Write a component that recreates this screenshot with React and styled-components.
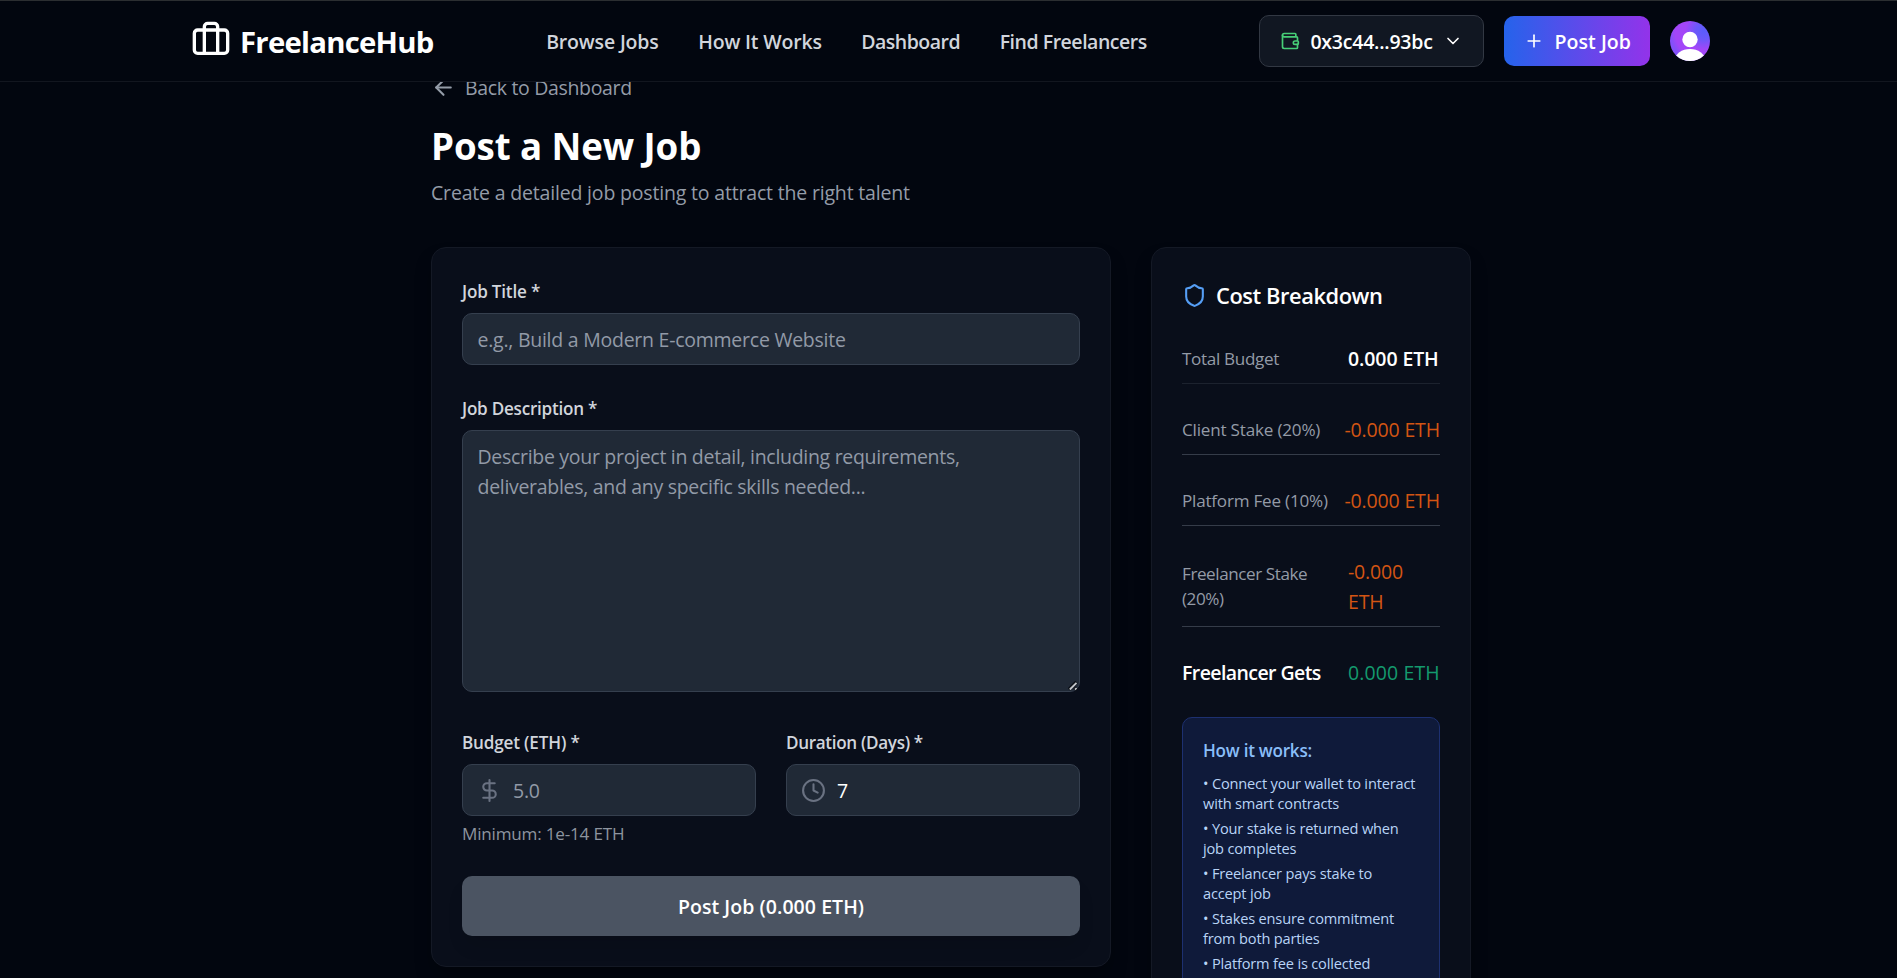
import React from "react";
import styled, { createGlobalStyle } from "styled-components";
import { Briefcase, Wallet, ChevronDown, Plus, ArrowLeft, DollarSign, Clock, Shield } from "lucide-react";

const GlobalStyle = createGlobalStyle`
  *, *::before, *::after { box-sizing: border-box; }
  body {
    margin: 0;
    overflow: hidden;
    background: #02060f;
    color: #fff;
    font-family: "Open Sans", "Noto Sans", sans-serif;
    font-size: 19.5px;
    line-height: 30px;
  }
  input, textarea, button { font: inherit; }
`;

const Page = styled.div`
  width: 1902px;
  height: 978px;
  overflow: hidden;
`;

const Header = styled.header`
  position: relative;
  z-index: 10;
  height: 82px;
  background: #02060f;
  border-top: 1px solid #2b2e31;
  border-bottom: 1px solid #12161f;
`;

const HeaderInner = styled.div`
  width: 1519px;
  height: 80px;
  margin-left: 191px;
  display: flex;
  align-items: center;
  justify-content: space-between;
`;

const Text = styled.span`
  letter-spacing: ${(p) => p.$track || 0}px;
  white-space: nowrap;
  position: relative;
  top: ${(p) => p.$drop ?? 1}px;
`;

const Logo = styled.div`
  display: flex;
  align-items: center;
  gap: 9px;
  width: 243px;
  font-size: 29.3px;
  font-weight: 700;
  line-height: 40px;
  svg { position: relative; top: -1px; }
`;

const Nav = styled.nav`
  display: flex;
  gap: 39.5px;
  font-weight: 600;
  color: #d1d5dc;
`;

const Actions = styled.div`
  display: flex;
  align-items: center;
  gap: 20px;
  font-weight: 600;
`;

const WalletButton = styled.button`
  display: flex;
  align-items: center;
  justify-content: space-between;
  width: 225px;
  height: 52px;
  padding: 0 20px;
  color: #fff;
  font-weight: 600;
  background: #111722;
  border: 1px solid #323843;
  border-radius: 10px;
`;

const PostLink = styled.button`
  display: flex;
  align-items: center;
  justify-content: space-between;
  width: 146px;
  height: 50px;
  padding: 0 19px 0 20px;
  border: 0;
  border-radius: 10px;
  color: #fff;
  font-weight: 600;
  background: linear-gradient(90deg, #2563eb, #9333ea);
`;

const Avatar = styled.svg`
  display: block;
  width: 40px;
  height: 40px;
  border-radius: 50%;
`;

const Main = styled.main`
  width: 1040px;
  margin: -10px auto 0;
`;

const BackLink = styled.a`
  display: flex;
  align-items: center;
  gap: 9px;
  margin-bottom: 20px;
  color: #949ca8;
`;

const Title = styled.h1`
  margin: 0 0 10px;
  font-size: 36.7px;
  font-weight: 700;
  line-height: 45px;
`;

const Subtitle = styled.p`
  margin: 0 0 40px;
  color: #949ca8;
`;

const Columns = styled.div`
  display: grid;
  grid-template-columns: 680px 320px;
  gap: 40px;
  align-items: start;
`;

const Card = styled.section`
  padding: 30px;
  background: #090e1a;
  border: 1px solid #141925;
  border-radius: 15px;
  box-shadow: 0 12px 19px -4px rgba(0, 0, 0, 0.35);
`;

const Field = styled.div`
  display: flex;
  flex-direction: column;
  margin-bottom: ${(p) => (p.$flush ? 0 : 30)}px;
`;

const Label = styled.label`
  margin-bottom: 10px;
  font-size: 17.1px;
  font-weight: 600;
  line-height: 25px;
  color: #d1d5dc;
`;

const controlStyle = `
  width: 100%;
  color: #fff;
  background: #202936;
  border: 1px solid #353f4e;
  border-radius: 10px;
  outline: none;
  &::placeholder { color: #929aa7; opacity: 1; }
`;

const Input = styled.input`
  ${controlStyle}
  letter-spacing: -0.25px;
  height: 52px;
  padding: 1px 15px 0 ${(p) => (p.$icon ? 50 : 14.5)}px;
`;

const TextAreaFrame = styled.div`
  display: grid;
  margin-bottom: 7px;
  > * { grid-area: 1 / 1; }
`;

const TextArea = styled.textarea`
  ${controlStyle}
  letter-spacing: -0.3px;
  height: 262px;
  padding: 11px 15px 10px 14.5px;
  line-height: 30px;
  resize: none;
  display: block;
`;

const ResizeGrip = styled.svg`
  align-self: end;
  justify-self: end;
  z-index: 1;
  width: 11px;
  height: 11px;
  margin: 0 1px 1px 0;
`;

const FieldPair = styled.div`
  display: grid;
  grid-template-columns: 1fr 1fr;
  gap: 30px;
  margin-bottom: 30px;
`;

const InputWithIcon = styled.div`
  display: grid;
  align-items: center;
  > * { grid-area: 1 / 1; }
  svg { margin-left: 15px; z-index: 1; color: #6a7282; }
`;

const Hint = styled.p`
  margin: 5px 0 0;
  font-size: 17.1px;
  line-height: 25px;
  color: #8d949f;
`;

const Submit = styled.button`
  width: 100%;
  height: 60px;
  border: 0;
  border-radius: 10px;
  color: #fff;
  font-weight: 600;
  background: #4b5462;
  box-shadow: 0 12px 19px -4px rgba(0, 0, 0, 0.12);
`;

const CardHeading = styled.h2`
  display: flex;
  align-items: center;
  gap: 9px;
  margin: 0 0 20px;
  font-size: 21.9px;
  font-weight: 600;
  line-height: 35px;
  svg { color: #559ef5; }
`;

const CostRow = styled.div`
  display: flex;
  justify-content: space-between;
  align-items: center;
  padding: 10px 0;
  margin-bottom: 20px;
  border-bottom: ${(p) => (p.$last ? "0" : `1px solid ${p.$faint ? "#1c222e" : "#353c49"}`)};
`;

const CostLabel = styled.span`
  font-size: ${(p) => (p.$strong ? 19.5 : 17.1)}px;
  font-weight: ${(p) => (p.$strong ? 600 : 400)};
  line-height: 25px;
  letter-spacing: ${(p) => p.$track}px;
  color: ${(p) => (p.$strong ? "#fff" : "#949ba7")};
  white-space: nowrap;
`;

const Amount = styled.span`
  width: ${(p) => (p.$wide ? 95.5 : 92)}px;
  font-weight: ${(p) => p.$weight || 400};
  letter-spacing: ${(p) => p.$track}px;
  color: ${(p) => p.$color};
  white-space: nowrap;
  position: relative;
  top: 0.5px;
`;

const InfoBox = styled.div`
  height: 320px;
  padding: 20px;
  background: #0f1a3a;
  border: 1px solid #1d3070;
  border-radius: 10px;
`;

const InfoTitle = styled.h3`
  margin: 0 0 10px;
  font-size: 17.1px;
  font-weight: 600;
  line-height: 25px;
  color: #8abef8;
`;

const InfoList = styled.ul`
  list-style: none;
  margin: 0;
  padding: 0;
  display: grid;
  gap: 5px;
  font-size: 14.6px;
  line-height: 20px;
  letter-spacing: -0.18px;
  color: #b9d4f6;
`;

const NAV = [["Browse Jobs", -0.156], ["How It Works", -0.18], ["Dashboard", -0.5], ["Find Freelancers", -0.465]];

const NOTES = [
  ["Connect your wallet to interact", "with smart contracts"],
  ["Your stake is returned when", "job completes"],
  ["Freelancer pays stake to", "accept job"],
  ["Stakes ensure commitment", "from both parties"],
  ["Platform fee is collected"],
];

const ORANGE = "#d35513";

export default function App() {
  return (
    <Page>
      <GlobalStyle />
      <Header>
        <HeaderInner>
          <Logo>
            <Briefcase size={40} />
            <Text $track={-0.75}>FreelanceHub</Text>
          </Logo>
          <Nav>
            {NAV.map(([name, track]) => <Text key={name} $track={track} $drop={0.5}>{name}</Text>)}
          </Nav>
          <Actions>
            <WalletButton>
              <Wallet size={20} color="#47cf77" />
              <Text $track={-0.23}>0x3c44...93bc</Text>
              <ChevronDown size={20} />
            </WalletButton>
            <PostLink>
              <Plus size={20} />
              <Text $track={0.05}>Post Job</Text>
            </PostLink>
            <Avatar viewBox="0 0 40 40">
              <defs>
                <radialGradient id="avatarFill" cx="0.85" cy="0.25" r="0.85">
                  <stop offset="0" stopColor="#5a5cfb" />
                  <stop offset="0.25" stopColor="#6c58fa" />
                  <stop offset="0.55" stopColor="#a346f8" />
                  <stop offset="0.85" stopColor="#a346f8" />
                  <stop offset="1" stopColor="#8450f9" />
                </radialGradient>
              </defs>
              <rect width="40" height="40" fill="url(#avatarFill)" />
              <circle cx="20" cy="18.5" r="7.7" fill="#fff" />
              <ellipse cx="20" cy="39" rx="15" ry="11" fill="#fff" />
            </Avatar>
          </Actions>
        </HeaderInner>
      </Header>
      <Main>
        <BackLink>
          <ArrowLeft size={25} />
          <Text $track={-0.33}>Back to Dashboard</Text>
        </BackLink>
        <Title><Text $track={-0.1} $drop={2}>Post a New Job</Text></Title>
        <Subtitle><Text $track={-0.18}>Create a detailed job posting to attract the right talent</Text></Subtitle>
        <Columns>
          <Card>
            <Field>
              <Label><Text $track={-0.2}>Job Title *</Text></Label>
              <Input placeholder="e.g., Build a Modern E-commerce Website" />
            </Field>
            <Field>
              <Label><Text $track={-0.24}>Job Description *</Text></Label>
              <TextAreaFrame>
                <TextArea placeholder="Describe your project in detail, including requirements, deliverables, and any specific skills needed..." />
                <ResizeGrip viewBox="0 0 11 11">
                  <path d="M1 9.5L8.5 2M6.5 10L9 7.5" stroke="#0b0f16" strokeWidth="3.6" />
                  <path d="M1.8 9.5L8.5 2.8" stroke="#c4c7cb" strokeWidth="1.8" />
                  <path d="M7 9.6L8.6 8" stroke="#c4c7cb" strokeWidth="1.6" />
                </ResizeGrip>
              </TextAreaFrame>
            </Field>
            <FieldPair>
              <Field $flush>
                <Label><Text $track={-0.17}>Budget (ETH) *</Text></Label>
                <InputWithIcon>
                  <DollarSign size={25} />
                  <Input $icon placeholder="5.0" />
                </InputWithIcon>
                <Hint><Text $track={-0.2} $drop={0}>Minimum: 1e-14 ETH</Text></Hint>
              </Field>
              <Field $flush>
                <Label><Text $track={-0.33}>Duration (Days) *</Text></Label>
                <InputWithIcon>
                  <Clock size={25} />
                  <Input $icon defaultValue="7" />
                </InputWithIcon>
              </Field>
            </FieldPair>
            <Submit><Text $track={0.06} $drop={0.5}>Post Job (0.000 ETH)</Text></Submit>
          </Card>
          <Card>
            <CardHeading>
              <Shield size={25} />
              <Text $track={-0.45} $drop={0}>Cost Breakdown</Text>
            </CardHeading>
            <CostRow $faint>
              <CostLabel $track={-0.33}>Total Budget</CostLabel>
              <Amount $weight={600} $track={-0.1} $color="#fff">0.000 ETH</Amount>
            </CostRow>
            <CostRow>
              <CostLabel $track={-0.2}>Client Stake (20%)</CostLabel>
              <Amount $wide $track={-0.16} $color={ORANGE}>-0.000 ETH</Amount>
            </CostRow>
            <CostRow>
              <CostLabel $track={-0.22}>Platform Fee (10%)</CostLabel>
              <Amount $wide $track={-0.16} $color={ORANGE}>-0.000 ETH</Amount>
            </CostRow>
            <CostRow>
              <CostLabel $track={-0.43}>Freelancer Stake<br />(20%)</CostLabel>
              <Amount $track={-0.16} $color={ORANGE}>-0.000<br />ETH</Amount>
            </CostRow>
            <CostRow $last>
              <CostLabel $strong $track={-0.58}>Freelancer Gets</CostLabel>
              <Amount $weight={500} $track={0.12} $color="#149a6e">0.000 ETH</Amount>
            </CostRow>
            <InfoBox>
              <InfoTitle><Text $track={-0.25} $drop={0}>How it works:</Text></InfoTitle>
              <InfoList>
                {NOTES.map(([first, second]) => (
                  <li key={first}>• {first}{second && <><br />{second}</>}</li>
                ))}
              </InfoList>
            </InfoBox>
          </Card>
        </Columns>
      </Main>
    </Page>
  );
}
